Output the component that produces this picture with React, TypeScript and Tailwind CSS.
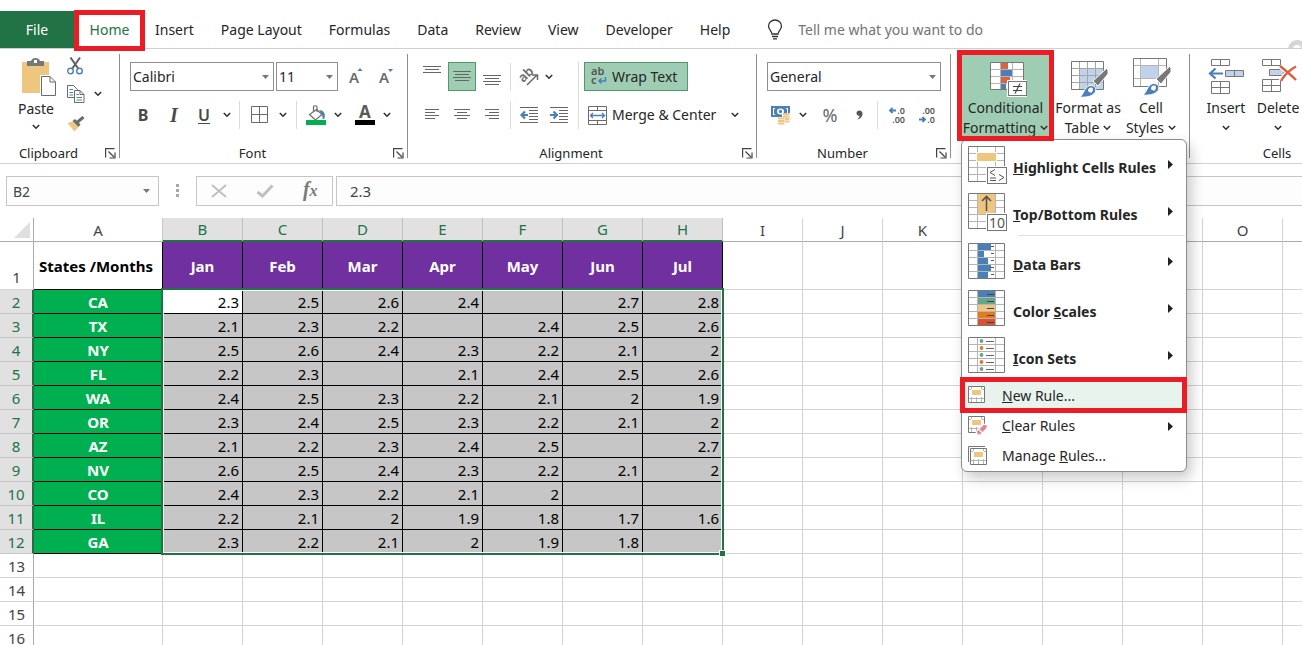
import React from 'react';

const months = ['Jan', 'Feb', 'Mar', 'Apr', 'May', 'Jun', 'Jul'];

const rows: { state: string; values: string[] }[] = [
  { state: 'CA', values: ['2.3', '2.5', '2.6', '2.4', '', '2.7', '2.8'] },
  { state: 'TX', values: ['2.1', '2.3', '2.2', '', '2.4', '2.5', '2.6'] },
  { state: 'NY', values: ['2.5', '2.6', '2.4', '2.3', '2.2', '2.1', '2'] },
  { state: 'FL', values: ['2.2', '2.3', '', '2.1', '2.4', '2.5', '2.6'] },
  { state: 'WA', values: ['2.4', '2.5', '2.3', '2.2', '2.1', '2', '1.9'] },
  { state: 'OR', values: ['2.3', '2.4', '2.5', '2.3', '2.2', '2.1', '2'] },
  { state: 'AZ', values: ['2.1', '2.2', '2.3', '2.4', '2.5', '', '2.7'] },
  { state: 'NV', values: ['2.6', '2.5', '2.4', '2.3', '2.2', '2.1', '2'] },
  { state: 'CO', values: ['2.4', '2.3', '2.2', '2.1', '2', '', ''] },
  { state: 'IL', values: ['2.2', '2.1', '2', '1.9', '1.8', '1.7', '1.6'] },
  { state: 'GA', values: ['2.3', '2.2', '2.1', '2', '1.9', '1.8', ''] },
];

const dataCols = ['B', 'C', 'D', 'E', 'F', 'G', 'H'];
const emptyCols = ['I', 'J', 'K', 'L', 'M', 'N', 'O', 'P'];
const emptyRows = [13, 14, 15, 16];
const tabs = ['Insert', 'Page Layout', 'Formulas', 'Data', 'Review', 'View', 'Developer', 'Help'];

const GRAY = '#6b6b6b';
const BLUE = '#4a7fb8';
const GOLD = '#eec67f';

/* ---------- small shared pieces ---------- */

const Chevron = () => (
  <svg width="8" height="6" viewBox="0 0 8 6" fill="none" stroke="#333" strokeWidth="1.6">
    <path d="M0.8 1 L4 4.2 L7.2 1" />
  </svg>
);

const Triangle = () => (
  <svg className="pointer-events-none absolute top-1/2 right-[5px] -translate-y-1/2" width="7" height="4" viewBox="0 0 7 4">
    <path d="M0 0 H7 L3.5 4 Z" fill="#777" />
  </svg>
);

const MenuButton = ({ label, className }: { label: string; className: string }) => (
  <button aria-label={label} className={`flex h-7 items-center justify-center ${className}`}>
    <Chevron />
  </button>
);

const Launcher = ({ label }: { label: string }) => (
  <button aria-label={label} className="flex h-4 w-[22px] items-center justify-end pr-[3px]">
    <svg width="11" height="11" viewBox="0 0 11 11" fill="none" stroke="#444" strokeWidth="1.2">
      <path d="M0.6 9.5 V0.6 H9.5" />
      <path d="M3.5 3.5 L9 9" />
      <path d="M10 4.5 V10 H4.5" />
    </svg>
  </button>
);

interface GroupProps {
  name: string;
  launcher?: boolean;
  className: string;
  children: React.ReactNode;
}

const Group: React.FC<GroupProps> = ({ name, launcher, className, children }) => (
  <section className={`flex h-[107px] shrink-0 flex-col ${className}`}>
    <div className="flex-1">{children}</div>
    <div className="flex h-4 items-center">
      <span className="flex-1 text-center text-[13px] leading-4">{name}</span>
      {launcher && <Launcher label={`${name} settings`} />}
    </div>
  </section>
);

const GroupDivider = () => <div className="h-[104px] w-px shrink-0 bg-[#8f8f8f]" />;
const Sep = () => <span className="mx-1 h-7 w-px shrink-0 bg-[#dcdcdc]" />;

/* ---------- ribbon icons ---------- */

const PasteIcon = () => (
  <svg width="34" height="39" viewBox="0 0 34 39">
    <rect x="0" y="4" width="27" height="31" fill={GOLD} />
    <path d="M5 8 V3 H9 C9.500 1 11.500 0 13.500 0 S17.500 1 18 3 H22 V8 Z" fill="#777" />
    <rect x="12" y="2" width="3" height="3" fill="#fff" />
    <path d="M18 17 H28 L35 24 V39 H18 Z" fill="#fff" />
    <path d="M19.500 18.500 H28 L33.500 24 V37.500 H19.500 Z M28 18.500 V24 H33.500" fill="#fff" stroke={GRAY} />
  </svg>
);

const CutIcon = () => (
  <svg width="17" height="18" viewBox="0 0 17 18" fill="none">
    <path d="M3.500 0.500 L11.500 12 M13 0.500 L5 12" stroke="#5f5f5f" strokeWidth="2" />
    <circle cx="3.500" cy="14" r="2.800" stroke={BLUE} strokeWidth="1.400" />
    <circle cx="12.500" cy="14" r="2.800" stroke={BLUE} strokeWidth="1.400" />
  </svg>
);

const CopyIcon = () => (
  <svg width="18" height="19" viewBox="0 0 18 19" fill="#fff" stroke={GRAY}>
    <path d="M0.500 0.500 H6.500 L10.500 4.500 V12.500 H0.500 Z" />
    <path d="M2.500 4.500 H6 M2.500 7.500 H6 M2.500 10 H6" stroke={BLUE} />
    <path d="M7.500 5.500 H13 L17 9.500 V17.500 H7.500 Z M13 5.500 V9.500 H17" />
    <path d="M9.500 9.500 H12 M9.500 12.500 H15 M9.500 15 H15" stroke={BLUE} />
  </svg>
);

const PainterIcon = () => (
  <svg width="18" height="16" viewBox="0 0 18 16">
    <path d="M0.500 7 L6 5.500 L11.500 11 L7.500 15.500 Z" fill={GOLD} />
    <path d="M5.500 5 L8 3 L13.500 8.500 L11.500 11 Z" fill={GRAY} />
    <path d="M10.500 6 L16.500 1" stroke={GRAY} strokeWidth="3" />
  </svg>
);

const FontSizeIcon = ({ up }: { up?: boolean }) => (
  <svg width="16" height="18" viewBox="0 0 16 18" className="overflow-visible">
    <text x="0" y="15" fontFamily="Noto Sans, sans-serif" fontSize="15" fontWeight="600" fill={GRAY}>A</text>
    <path d={up ? 'M8.500 3 L11 0 L13.500 3 Z' : 'M9 1 H14 L11.500 4 Z'} fill={BLUE} />
  </svg>
);

const BordersIcon = () => (
  <svg width="18" height="18" viewBox="0 0 18 18" fill="none" stroke={GRAY}>
    <path d="M0.500 0.500 H16.500 V16.500 H0.500 Z M8.500 0.500 V16.500 M0.500 8.500 H16.500" />
  </svg>
);

const FillIcon = () => (
  <svg width="20" height="20" viewBox="0 0 20 20">
    <path d="M10.500 4.500 L16 9.500 L9.500 15 L3.500 9.500 Z" fill="#fff" stroke={GRAY} strokeWidth="1.200" />
    <path d="M7.500 7 V2 C7.500 0.300 11 0.300 11 2 V7" fill="none" stroke={GRAY} strokeWidth="1.200" />
    <path d="M13 5 C17 5 20 8 18.500 13.500 L16.500 14 C16.500 11 16.500 9.500 14.500 7.500 Z" fill={BLUE} />
    <rect x="0" y="15" width="20" height="5" fill="#00b050" />
  </svg>
);

const FontColorIcon = () => (
  <svg width="20" height="20" viewBox="0 0 20 20" className="overflow-visible">
    <text x="10" y="13" textAnchor="middle" fontFamily="Noto Sans, sans-serif" fontSize="17" fontWeight="700" fill="#5a5a5a">A</text>
    <rect x="0" y="15" width="20" height="5" fill="#000" />
  </svg>
);

// Each entry is the x-range of one text line, from top to bottom
const LinesIcon = ({ lines, width = 18 }: { lines: [number, number][]; width?: number }) => (
  <svg width={width} height={lines.length * 3} viewBox={`0 0 ${width} ${lines.length * 3}`} stroke="#666">
    {lines.map(([a, b], i) => (
      <path key={i} d={`M${a} ${i * 3 + 0.5} H${b}`} />
    ))}
  </svg>
);

const OrientationIcon = () => (
  <svg width="20" height="18" viewBox="0 0 20 18" className="overflow-visible">
    <text x="3" y="14" transform="rotate(-45 5 13)" fontFamily="Noto Sans, sans-serif" fontSize="13" fontWeight="600" fill={GRAY}>ab</text>
    <path d="M8 17 L18 7 M13 7 H18.500 V12" fill="none" stroke={GRAY} strokeWidth="1.500" />
  </svg>
);

const IndentIcon = ({ right }: { right?: boolean }) => (
  <svg width="18" height="17" viewBox="0 0 18 17" fill="none">
    <path d="M0 0.500 H18 M9 3.500 H18 M9 6.500 H18 M9 9.500 H18 M9 12.500 H18 M0 15.500 H18" stroke="#666" />
    <path d={right ? 'M0 8 H6.500 M3.500 4.500 L7 8 L3.500 11.500' : 'M8 8 H1.500 M5 4.500 L1.500 8 L5 11.500'} stroke={BLUE} strokeWidth="2.200" />
  </svg>
);

const WrapIcon = () => (
  <svg width="18" height="19" viewBox="0 0 18 19" className="overflow-visible">
    <text x="1" y="8" fontFamily="Noto Sans, sans-serif" fontSize="11" fontWeight="600" fill="#555">ab</text>
    <text x="1" y="17" fontFamily="Noto Sans, sans-serif" fontSize="11" fontWeight="600" fill="#555">c</text>
    <path d="M15.500 10 V14 H9 M11.500 11.500 L9 14 L11.500 16.500" fill="none" stroke={BLUE} strokeWidth="1.500" />
  </svg>
);

const MergeIcon = () => (
  <svg width="19" height="19" viewBox="0 0 19 19" fill="none" stroke={GRAY}>
    <path d="M0.500 0.500 H18.500 V18.500 H0.500 Z M0.500 4.500 H18.500 M0.500 14.500 H18.500 M9.500 0.500 V4.500 M9.500 14.500 V18.500" />
    <path d="M2.500 9.500 H16.500 M5 7 L2.500 9.500 L5 12 M14 7 L16.500 9.500 L14 12" stroke={BLUE} strokeWidth="1.400" />
  </svg>
);

const CurrencyIcon = () => (
  <svg width="20" height="20" viewBox="0 0 20 20">
    <rect x="0" y="1" width="19" height="11" fill={BLUE} />
    <path d="M2 3 H4.500 L3 4.500 V8.500 L4.500 10 H2 Z M17 3 H14.500 L16 4.500 V8.500 H17 Z" fill="#fff" />
    <ellipse cx="9.500" cy="6.500" rx="3.500" ry="3" fill="#fff" />
    <circle cx="9.500" cy="6.500" r="1.700" fill={BLUE} />
    <rect x="11" y="8" width="9" height="9" fill="#fff" />
    <rect x="6" y="12" width="8" height="8" fill="#fff" />
    <path d="M12 9 H18.500 M12 11.500 H18.500 M14 14 H18.500 M14 16.500 H18.500 M7 13.500 H13.500 M7 16 H13.500 M7 18.500 H13.500" stroke={GOLD} strokeWidth="1.800" />
  </svg>
);

const DecimalIcon = ({ less }: { less?: boolean }) => (
  <svg width="18" height="18" viewBox="0 0 18 18" className="overflow-visible">
    <g fontFamily="Noto Sans, sans-serif" fontSize="9" fontWeight="600" fill="#555" textAnchor="end">
      <text x="17" y="8">{less ? '.00' : '.0'}</text>
      <text x="17" y="17">{less ? '.0' : '.00'}</text>
    </g>
    <path d={less ? 'M1 13.500 H7 M4.500 11 L7 13.500 L4.500 16' : 'M8 4.500 H2 M4.500 2 L2 4.500 L4.500 7'} fill="none" stroke={BLUE} strokeWidth="1.800" />
  </svg>
);

const CondFormatIcon = () => (
  <svg width="38" height="36" viewBox="0 0 38 36">
    <path d="M0.500 0.500 H33.500 V27.500 H0.500 Z" fill="#fff" />
    <path d="M10.500 1 V28 M22.500 1 V28 M1 7.500 H33 M1 14.500 H33 M1 21.500 H33" stroke="#b5b5b5" />
    <rect x="11" y="1" width="7" height="6" fill="#dd6143" />
    <rect x="11" y="8" width="11" height="6" fill={BLUE} />
    <rect x="11" y="15" width="9" height="6" fill="#dd6143" />
    <rect x="11" y="22" width="5" height="5" fill={BLUE} />
    <path d="M0.500 0.500 H33.500 V27.500 H0.500 Z" fill="none" stroke="#777" />
    <rect x="17" y="18" width="20" height="17" fill="#fff" />
    <rect x="18.500" y="19.500" width="18" height="14" fill="#fff" stroke="#777" />
    <path d="M23 24.500 H32 M23 28.500 H32 M30 21.500 L25 31.500" stroke="#444" strokeWidth="1.200" />
  </svg>
);

const Brush = () => (
  <g>
    <path d="M37.500 7.500 L39 9 V13 L29 25 L24 20 Z" fill="#787878" stroke="#fff" />
    <path d="M10.500 36 C15 34 15 26 21 24.500 C26 24 28 28 26 31.500 C23 36 16 36.500 10.500 36 Z" fill={BLUE} stroke="#fff" />
    <path d="M19 30 C19 27 21 26 23 26.500 C25 28 23.500 31 22 32 C20.500 30.500 20 31.500 19 30 Z" fill="#fff" />
  </g>
);

const FormatTableIcon = () => (
  <svg width="40" height="37" viewBox="0 0 40 37">
    <path d="M2.500 0.500 H34.500 V28.500 H2.500 Z" fill="#fff" />
    <rect x="11" y="8" width="23" height="20" fill="#c0d3ea" />
    <path d="M10.500 1 V28 M18.500 1 V28 M26.500 1 V28 M3 7.500 H34 M3 14.500 H34 M3 21.500 H34" stroke="#a5a5a5" />
    <path d="M2.500 0.500 H34.500 V28.500 H2.500 Z" fill="none" stroke="#777" />
    <Brush />
  </svg>
);

const CellStylesIcon = () => (
  <svg width="40" height="38" viewBox="0 -1 40 38">
    <path d="M1.500 -0.500 H34.500 V27.500 H1.500 Z" fill="#fff" />
    <path d="M8.500 0 V27 M26.500 0 V27 M2 6.500 H34 M2 19.500 H34" stroke="#b5b5b5" />
    <rect x="9" y="7" width="17" height="12" fill="#c0d3ea" />
    <path d="M1.500 -0.500 H34.500 V27.500 H1.500 Z" fill="none" stroke="#777" />
    <Brush />
  </svg>
);

const InsertCellsIcon = () => (
  <svg width="37" height="36" viewBox="0 0 37 36" fill="none" stroke="#777">
    <path d="M3.500 0.500 H21.500 V6.500 H3.500 Z M12.500 0.500 V6.500" />
    <path d="M17.500 11.500 H35.500 V17.500 H17.500 Z M26.500 11.500 V17.500" fill="#c0d3ea" />
    <path d="M3.500 22.500 H21.500 V34.500 H3.500 Z M12.500 22.500 V34.500 M3.500 28.500 H21.500" />
    <path d="M15 14.500 H2.500 M7.500 9.500 L2 14.500 L7.500 19.500" stroke={BLUE} strokeWidth="2.200" />
  </svg>
);

const DeleteCellsIcon = () => (
  <svg width="37" height="36" viewBox="0 0 37 36" fill="none" stroke="#777">
    <path d="M1.500 0.500 H19.500 V6.500 H1.500 Z M10.500 0.500 V6.500" />
    <path d="M8.500 10.500 H22.500 V16.500 H8.500 Z" fill="#c0d3ea" />
    <path d="M1.500 20.500 H19.500 V32.500 H1.500 Z M10.500 20.500 V32.500 M1.500 26.500 H19.500" />
    <path d="M19 7 C24 11 30 16 35 21 M35 7.500 C30 10 23 16 20 22" stroke="#fff" strokeWidth="5" />
    <path d="M19 7 C24 11 30 16 35 21 M35 7.500 C30 10 23 16 20 22" stroke="#dd5f40" strokeWidth="2.400" />
  </svg>
);

/* ---------- menu icons ---------- */

const BigGrid = ({ children }: { children: React.ReactNode }) => (
  <svg width="40" height="38" viewBox="0 0 40 38" className="shrink-0">
    <path d="M0.500 0.500 H36.500 V35.500 H0.500 Z" fill="#fff" />
    <path d="M9.500 1 V35 M27.500 1 V35 M1 7.500 H36 M1 14.500 H36 M1 21.500 H36 M1 28.500 H36" stroke="#b5b5b5" />
    <path d="M0.500 0.500 H36.500 V35.500 H0.500 Z" fill="none" stroke="#777" />
    {children}
  </svg>
);

const Badge = () => (
  <>
    <rect x="18" y="20" width="22" height="18" fill="#fff" />
    <rect x="19.500" y="21.500" width="19" height="16" fill="#fff" stroke="#777" />
  </>
);

const HighlightIcon = () => (
  <BigGrid>
    <rect x="8" y="6" width="21" height="10" fill="#fff" />
    <rect x="9" y="7" width="19" height="8" fill={GOLD} />
    <Badge />
    <path d="M27 23.500 L22 26.500 L27 29.500 M22 32 H28 M22 34.500 H28 M31 28.500 L36 31.500 L31 34.500" fill="none" stroke="#555" />
  </BigGrid>
);

const TopBottomIcon = () => (
  <BigGrid>
    <rect x="10" y="1" width="17" height="20" fill={GOLD} />
    <path d="M18.500 18 V4 M14 8 L18.500 3.500 L23 8" fill="none" stroke="#555" strokeWidth="1.600" />
    <Badge />
    <text x="29" y="35" textAnchor="middle" fontFamily="Noto Sans, sans-serif" fontSize="14" fill="#555">10</text>
  </BigGrid>
);

const DataBarsIcon = () => (
  <BigGrid>
    {[13, 6, 10, 13, 10].map((w, i) => (
      <g key={i}>
        <rect x="10" y={i * 7 + 1} width="17" height="6" fill="#fff" />
        <rect x="10" y={i * 7 + 1} width={w} height="6" fill={BLUE} />
        <path d={`M23 ${i * 7 + 3.5} H26`} stroke="#555" />
      </g>
    ))}
  </BigGrid>
);

const ColorScalesIcon = () => (
  <BigGrid>
    {[BLUE, '#66a58e', GOLD, '#e6781e', '#d9512f'].map((c, i) => (
      <g key={c}>
        <rect x="10" y={i * 7 + 1} width="17" height="6" fill={c} />
        <path d={`M19 ${i * 7 + 4.5} H26`} stroke="#444" />
      </g>
    ))}
  </BigGrid>
);

const IconSetsIcon = () => (
  <BigGrid>
    {['#66a58e', '#e6781e', '#66a58e', '#e6781e', '#66a58e'].map((c, i) => (
      <g key={i}>
        <circle cx="13.500" cy={i * 7 + 4} r="1.900" fill={c} />
        <path d={`M18 ${i * 7 + 4.5} H26`} stroke="#666" />
      </g>
    ))}
  </BigGrid>
);

const SmallGrid = ({ children }: { children?: React.ReactNode }) => (
  <svg width="20" height="20" viewBox="0 0 20 20" className="shrink-0">
    <path d="M0.500 0.500 H16.500 V16.500 H0.500 Z" fill="#fff" />
    <path d="M3.500 1 V16 M13.500 1 V16 M8.500 10 V16 M1 3.500 H16 M1 12.500 H16" stroke="#b5b5b5" />
    <rect x="3" y="3" width="11" height="8" fill="#fff" />
    <rect x="4" y="4" width="9" height="5" fill={GOLD} />
    <path d="M0.500 0.500 H16.500 V16.500 H0.500 Z" fill="none" stroke="#777" />
    {children}
  </svg>
);

const ClearRulesIcon = () => (
  <SmallGrid>
    <path d="M7.500 16 L15 7.500 L20 8 V13 L14 20 H9 Z" fill="#fff" />
    <path d="M11.500 13 L15.500 9 H18.500 V12 L14.500 16 Z M10.500 14 L13.500 17 L12 18.500 H10.500 L9 17 V15.500 Z" fill="#e8839a" />
  </SmallGrid>
);

const ManageRulesIcon = () => (
  <svg width="20" height="20" viewBox="0 0 20 20" className="shrink-0">
    <path d="M0.500 16 V0.500 H17" fill="none" stroke="#777" />
    <path d="M2.500 2.500 H18.500 V18.500 H2.500 Z" fill="#fff" />
    <path d="M5.500 3 V18 M15.500 3 V18 M10.500 12 V18 M3 5.500 H18 M3 14.500 H18" stroke="#b5b5b5" />
    <rect x="5" y="5" width="11" height="8" fill="#fff" />
    <rect x="6" y="6" width="9" height="5" fill={GOLD} />
    <path d="M2.500 2.500 H18.500 V18.500 H2.500 Z" fill="none" stroke="#777" />
  </svg>
);

/* ---------- conditional formatting menu ---------- */

interface ItemProps {
  icon: React.ReactNode;
  children: React.ReactNode;
  submenu?: boolean;
}

const SubArrow = () => (
  <svg width="5" height="9" viewBox="0 0 5 9" className="ml-auto shrink-0">
    <path d="M0 0 L5 4.500 L0 9 Z" fill="#222" />
  </svg>
);

const BigItem = ({ icon, children }: ItemProps) => (
  <button role="menuitem" className="flex h-[47px] w-full items-center pr-[13px] pl-1.5 text-left">
    {icon}
    <span className="ml-[5px] pt-1.5 text-sm leading-5 font-bold whitespace-nowrap">{children}</span>
    <SubArrow />
  </button>
);

const SmallItem = ({ icon, children, submenu }: ItemProps) => (
  <button role="menuitem" className="flex h-[30px] w-full items-center pr-[13px] pl-1.5 text-left">
    {icon}
    <span className="ml-3.5 text-sm leading-5 whitespace-nowrap">{children}</span>
    {submenu && <SubArrow />}
  </button>
);

const RedFrame = ({ className }: { className: string }) => (
  <span className={`pointer-events-none absolute z-10 border-[5px] border-[#ed1c24] ${className}`} />
);

const FormattingMenu = () => (
  <div
    role="menu"
    className="absolute top-[89px] left-1 z-20 w-[226px] rounded-md border border-[#8c8c8c] bg-white pt-px text-[#262626] shadow-[4px_6px_14px_rgba(0,0,0,0.22)]"
  >
    <BigItem icon={<HighlightIcon />}><u>H</u>ighlight Cells Rules</BigItem>
    <BigItem icon={<TopBottomIcon />}><u>T</u>op/Bottom Rules</BigItem>
    <div className="mr-px mb-0.5 ml-14 h-px bg-[#e1e1e1]" />
    <BigItem icon={<DataBarsIcon />}><u>D</u>ata Bars</BigItem>
    <BigItem icon={<ColorScalesIcon />}>Color <u>S</u>cales</BigItem>
    <BigItem icon={<IconSetsIcon />}><u>I</u>con Sets</BigItem>
    <div className="relative mt-0.5 bg-[#e9f3ee]">
      <SmallItem icon={<SmallGrid />}><u>N</u>ew Rule...</SmallItem>
      <RedFrame className="-top-1 -right-px -bottom-0.5 -left-0.5" />
    </div>
    <SmallItem icon={<ClearRulesIcon />} submenu><u>C</u>lear Rules</SmallItem>
    <SmallItem icon={<ManageRulesIcon />}>Manage <u>R</u>ules...</SmallItem>
  </div>
);

/* ---------- ribbon ---------- */

const TabStrip = () => (
  <nav className="flex h-[49px] shrink-0 items-stretch border-b border-[#d0d0d0] pt-[11px] text-sm whitespace-nowrap">
    <button className="w-[74px] shrink-0 bg-[#217346] text-white">File</button>
    <button className="relative mr-[-3px] w-[71px] shrink-0 text-[#217346]">
      Home
      <RedFrame className="inset-x-0 -top-px -bottom-[3px]" />
    </button>
    <div className="flex shrink-0 gap-px">
      {tabs.map(t => (
        <button key={t} className="px-[13px]">{t}</button>
      ))}
    </div>
    <label className="ml-6 flex shrink-0 items-center gap-[15px]">
      <svg width="16" height="21" viewBox="0 0 16 21" fill="none" stroke="#333" strokeWidth="1.300">
        <path d="M5 15 C5 12 1.500 11 1.500 7 C1.500 3.500 4.500 1 8 1 S14.500 3.500 14.500 7 C14.500 11 11 12 11 15 Z" />
        <path d="M5 17.500 H11 M6 19.800 H10" />
      </svg>
      <input aria-label="Search" className="w-60 outline-none placeholder:text-[#737373]" placeholder="Tell me what you want to do" />
    </label>
    <span className="ml-auto h-full w-3.5 overflow-hidden pt-[29px]">
      <span className="block size-[18px] rounded-full border-[5px] border-[#d6d6d6]" />
    </span>
  </nav>
);

const ClipboardGroup = () => (
  <Group name="Clipboard" launcher className="w-[119px]">
    <div className="flex pt-1">
      <button className="ml-3.5 flex w-11 flex-col items-center">
        <span className="ml-1.5"><PasteIcon /></span>
        <span className="mt-0.5 text-sm leading-5">Paste</span>
        <span className="flex h-4 items-center"><Chevron /></span>
      </button>
      <div className="ml-[9px] flex flex-col items-start">
        <button aria-label="Cut" className="flex h-4 items-center"><CutIcon /></button>
        <div className="flex h-10 items-center">
          <button aria-label="Copy"><CopyIcon /></button>
          <MenuButton label="Copy options" className="ml-[3px] w-5" />
        </div>
        <button aria-label="Format Painter" className="flex h-5 items-center"><PainterIcon /></button>
      </div>
    </div>
  </Group>
);

const FontGroup = () => (
  <Group name="Font" launcher className="w-[287px]">
    <div className="flex h-[37px] items-end gap-0.5 pl-2.5">
      <span className="relative">
        <select aria-label="Font name" className="block h-[29px] w-36 appearance-none border border-[#8f8f8f] bg-white px-0.5 text-sm">
          <option>Calibri</option>
        </select>
        <Triangle />
      </span>
      <span className="relative">
        <select aria-label="Font size" className="block h-[29px] w-[62px] appearance-none border border-[#8f8f8f] bg-white px-0.5 text-sm">
          <option>11</option>
        </select>
        <Triangle />
      </span>
      <button aria-label="Increase font size" className="ml-[3px] flex h-7 w-7 items-center justify-center"><FontSizeIcon up /></button>
      <button aria-label="Decrease font size" className="flex h-7 w-7 items-center justify-center"><FontSizeIcon /></button>
    </div>
    <div className="mt-2.5 flex h-7 items-center pl-[7px] text-[#4a4a4a]">
      <button className="h-7 w-8 text-base font-bold">B</button>
      <button className="h-7 w-[30px] font-['Liberation_Serif',serif] text-xl font-bold italic">I</button>
      <button className="h-7 w-[30px] text-base font-semibold underline underline-offset-2">U</button>
      <MenuButton label="Underline style" className="w-4" />
      <Sep />
      <button aria-label="Borders" className="ml-0.5 flex h-7 w-7 items-center justify-center"><BordersIcon /></button>
      <MenuButton label="Border style" className="w-[18px]" />
      <Sep />
      <button aria-label="Fill color" className="ml-px flex h-7 w-7 items-center justify-center"><FillIcon /></button>
      <MenuButton label="Fill colors" className="w-4" />
      <button aria-label="Font color" className="ml-[5px] flex h-7 w-7 items-center justify-center"><FontColorIcon /></button>
      <MenuButton label="Font colors" className="w-4" />
    </div>
  </Group>
);

const iconButton = 'flex h-7 w-7 shrink-0 items-center justify-center';

const AlignmentGroup = () => (
  <Group name="Alignment" launcher className="w-[348px]">
    <div className="flex pt-2 pl-2.5">
      <div className="flex flex-col gap-2.5">
        <div className="flex h-[29px] items-center">
          <div className="flex gap-0.5">
            <button aria-label="Top align" className={`${iconButton} pb-3`}><LinesIcon lines={[[0, 18], [2, 16], [0, 18]]} /></button>
            <button aria-label="Middle align" className="flex h-[29px] w-7 items-center justify-center border border-[#4f9a6d] bg-[#9fcdb3]"><LinesIcon lines={[[0, 18], [2, 16], [0, 18], [2, 16]]} /></button>
            <button aria-label="Bottom align" className={`${iconButton} pt-2.5`}><LinesIcon lines={[[0, 18], [2, 16], [0, 18], [2, 16]]} /></button>
          </div>
          <Sep />
          <button aria-label="Orientation" className={iconButton}><OrientationIcon /></button>
          <MenuButton label="Orientation options" className="w-3" />
        </div>
        <div className="flex h-7 items-center">
          <div className="flex gap-0.5">
            <button aria-label="Align left" className={iconButton}><LinesIcon width={14} lines={[[0, 14], [0, 10], [0, 14], [0, 10]]} /></button>
            <button aria-label="Center" className={iconButton}><LinesIcon width={16} lines={[[0, 16], [3, 13], [0, 16], [3, 13]]} /></button>
            <button aria-label="Align right" className={iconButton}><LinesIcon width={14} lines={[[0, 14], [4, 14], [0, 14], [4, 14]]} /></button>
          </div>
          <Sep />
          <button aria-label="Decrease indent" className={iconButton}><IndentIcon /></button>
          <button aria-label="Increase indent" className={`${iconButton} ml-0.5`}><IndentIcon right /></button>
        </div>
      </div>
      <span className="mr-[5px] ml-[5px] w-px bg-[#dcdcdc]" />
      <div className="flex flex-col items-start gap-2.5">
        <button className="flex h-[29px] w-[104px] items-center gap-1 border border-[#4f9a6d] bg-[#9fcdb3] pl-[5px] text-sm whitespace-nowrap">
          <WrapIcon />
          Wrap Text
        </button>
        <div className="flex h-7 items-center">
          <button className="flex items-center gap-[5px] pl-1 text-sm whitespace-nowrap">
            <MergeIcon />
            Merge &amp; Center
          </button>
          <MenuButton label="Merge options" className="ml-[9px] w-5" />
        </div>
      </div>
    </div>
  </Group>
);

const NumberGroup = () => (
  <Group name="Number" launcher className="w-[193px]">
    <div className="flex h-[37px] items-end pl-2.5">
      <span className="relative">
        <select aria-label="Number format" className="block h-[29px] w-[174px] appearance-none border border-[#8f8f8f] bg-white px-0.5 text-sm">
          <option>General</option>
        </select>
        <Triangle />
      </span>
    </div>
    <div className="mt-2.5 flex h-7 items-center pl-2.5 text-[#666]">
      <button aria-label="Accounting format" className={iconButton}><CurrencyIcon /></button>
      <MenuButton label="Currency list" className="w-4" />
      <button className="ml-1 h-7 w-[30px] text-lg">%</button>
      <button aria-label="Comma style" className={iconButton}>
        <svg width="7" height="10" viewBox="0 0 7 10"><path d="M0.500 3 C0.500 -0.500 6.500 -0.500 6.500 3.500 C6.500 6.500 4.500 9 1 9.500 C2.500 8.500 3.500 7.500 3.500 5.800 C1.500 6 0.500 4.500 0.500 3 Z" fill="#555" /></svg>
      </button>
      <Sep />
      <button aria-label="Increase decimal" className={`${iconButton} ml-px`}><DecimalIcon /></button>
      <button aria-label="Decrease decimal" className={`${iconButton} ml-0.5`}><DecimalIcon less /></button>
    </div>
  </Group>
);

const StylesGroup = () => (
  <div className="flex h-[107px] w-[238px] shrink-0 pl-1.5 text-sm leading-5 whitespace-nowrap">
    <div className="relative -mt-1 h-[91px] w-[97px]">
      <button className="flex h-full w-full flex-col items-center bg-[#9fcdb3] pt-3 text-[#262626]">
        <span className="ml-1.5"><CondFormatIcon /></span>
        <span>Conditional</span>
        <span className="flex items-center gap-1">Formatting <Chevron /></span>
      </button>
      <FormattingMenu />
      <RedFrame className="inset-0 z-30" />
    </div>
    <button className="flex w-[68px] flex-col items-center pt-[7px]">
      <span className="ml-0.5"><FormatTableIcon /></span>
      <span>Format as</span>
      <span className="flex items-center gap-1">Table <Chevron /></span>
    </button>
    <button className="flex w-[58px] flex-col items-center pt-1">
      <span className="ml-0.5"><CellStylesIcon /></span>
      <span className="mt-0.5">Cell</span>
      <span className="flex items-center gap-1">Styles <Chevron /></span>
    </button>
  </div>
);

const CellsGroup = () => (
  <Group name="Cells" className="w-[174px]">
    <div className="flex pt-[5px] pl-2.5 text-sm leading-5">
      <button className="flex w-[52px] flex-col items-center">
        <InsertCellsIcon />
        <span className="mt-[3px]">Insert</span>
        <span className="flex h-5 items-center"><Chevron /></span>
      </button>
      <button className="flex w-[52px] flex-col items-center">
        <span className="ml-0.5"><DeleteCellsIcon /></span>
        <span className="mt-[3px]">Delete</span>
        <span className="flex h-5 items-center"><Chevron /></span>
      </button>
    </div>
  </Group>
);

const Ribbon = () => (
  <div className="flex h-[115px] shrink-0 items-start border-b border-[#d0d0d0] pt-[5px]">
    <ClipboardGroup />
    <GroupDivider />
    <FontGroup />
    <GroupDivider />
    <AlignmentGroup />
    <GroupDivider />
    <NumberGroup />
    <GroupDivider />
    <StylesGroup />
    <GroupDivider />
    <CellsGroup />
  </div>
);

const FormulaBar = () => (
  <div className="flex h-[54px] shrink-0 items-start pt-3 pl-1.5 text-sm text-[#444]">
    <span className="relative">
      <input aria-label="Name box" defaultValue="B2" className="block h-[30px] w-[153px] border border-[#c6c6c6] bg-[#fdfdfd] px-1.5 outline-none" />
      <span className="absolute inset-y-0 right-1"><Triangle /></span>
    </span>
    <svg className="mx-4 mt-[7px]" width="5" height="15" viewBox="0 0 5 15" fill="#a8a8a8">
      <path d="M1 1 H4 V4 H1 Z M1 6 H4 V9 H1 Z M1 11 H4 V14 H1 Z" />
    </svg>
    <div className="flex h-[30px] w-[137px] shrink-0 items-center justify-around border border-[#c6c6c6] bg-[#fdfdfd]">
      <button aria-label="Cancel">
        <svg width="16" height="14" viewBox="0 0 16 14" stroke="#c0c0c0" strokeWidth="2"><path d="M1 1 L15 13 M15 1 L1 13" /></svg>
      </button>
      <button aria-label="Enter">
        <svg width="18" height="14" viewBox="0 0 18 14" fill="none" stroke="#c0c0c0" strokeWidth="3"><path d="M1.500 8 L6.500 12 L16.500 1.500" /></svg>
      </button>
      <button className="font-['Liberation_Serif',serif] text-xl leading-5 font-bold text-[#7a7a7a] italic">
        f<span className="text-base">x</span>
      </button>
    </div>
    <input aria-label="Formula" defaultValue="2.3" className="ml-[3px] block h-[30px] min-w-0 flex-1 border border-r-0 border-[#c6c6c6] bg-[#fdfdfd] px-[13px] text-[15px] outline-none" />
  </div>
);

/* ---------- sheet ---------- */

const colHead = 'h-6 border-r p-0 text-center font-normal';
const rowHead = 'h-6 border-b p-0 text-center font-normal';

const Sheet = () => (
  <div className="min-h-0 flex-1 overflow-hidden">
    <div className="relative w-max">
      <table className="w-[1363px] table-fixed border-separate border-spacing-0 text-[15px] leading-5">
        <colgroup>
          <col className="w-[34px]" />
          <col className="w-[129px]" />
          {[...dataCols, ...emptyCols].map(c => <col key={c} className="w-20" />)}
        </colgroup>
        <thead className="text-[#444]">
          <tr>
            <td className="h-6 border-r border-b border-[#ababab] p-0">
              <svg className="mr-[3px] ml-auto" width="16" height="16" viewBox="0 0 16 16"><path d="M16 0 V16 H0 Z" fill="#dfdfdf" /></svg>
            </td>
            <th className={`${colHead} border-b border-r-[#c6c6c6] border-b-[#ababab]`}>A</th>
            {dataCols.map(c => (
              <th key={c} className={`${colHead} border-b-2 border-r-[#c0c0c0] border-b-[#217346] bg-[#e1e1e1] text-[#217346]`}>{c}</th>
            ))}
            {emptyCols.map(c => (
              <th key={c} className={`${colHead} border-b border-r-[#d4d4d4] border-b-[#ababab]`}>{c}</th>
            ))}
          </tr>
        </thead>
        <tbody>
          <tr className="font-bold">
            <th className="h-12 border-r border-b border-r-[#ababab] border-b-[#d4d4d4] p-0 pb-0.5 text-center align-bottom font-normal text-[#444]">1</th>
            <td className="border-r border-b border-black p-0 pr-1 text-center whitespace-nowrap text-black">States /Months</td>
            {months.map(m => (
              <td key={m} className="border-r border-b border-black bg-[#7030a0] p-0 text-center text-white">{m}</td>
            ))}
            {emptyCols.map(c => <td key={c} className="border-r border-b border-[#d4d4d4] p-0" />)}
          </tr>
          {rows.map((row, r) => (
            <tr key={row.state}>
              <th className={`${rowHead} border-r-2 border-r-[#217346] border-b-[#c6c6c6] bg-[#e1e1e1] text-[#217346]`}>{r + 2}</th>
              <td className="border-r border-b border-black bg-[#00b050] p-0 text-center font-bold text-white">{row.state}</td>
              {row.values.map((v, c) => (
                <td
                  key={c}
                  className={`border-r border-b border-black p-0 pr-[3px] text-right text-black ${r === 0 && c === 0 ? 'bg-white' : 'bg-[#c6c6c6]'}`}
                >
                  {v}
                </td>
              ))}
              {emptyCols.map(c => <td key={c} className="border-r border-b border-[#d4d4d4] p-0" />)}
            </tr>
          ))}
          {emptyRows.map(n => (
            <tr key={n}>
              <th className={`${rowHead} border-r border-r-[#ababab] border-b-[#d4d4d4] text-[#444]`}>{n}</th>
              {['A', ...dataCols, ...emptyCols].map(c => (
                <td key={c} className="border-r border-b border-[#d4d4d4] p-0" />
              ))}
            </tr>
          ))}
        </tbody>
      </table>
      {/* Selected range B2:H12 with its fill handle */}
      <div className="pointer-events-none absolute top-[70px] left-[161px] h-[267px] w-[563px] border-2 border-[#217346]">
        <div className="h-full w-full border border-white" />
        <span className="absolute -right-[4px] -bottom-[4px] size-[7px] border border-white bg-[#217346]" />
      </div>
    </div>
  </div>
);

export default function App() {
  return (
    <div className="flex h-screen flex-col overflow-hidden bg-white font-['Noto_Sans','Open_Sans',sans-serif] text-[#262626]">
      <TabStrip />
      <Ribbon />
      <FormulaBar />
      <Sheet />
    </div>
  );
}
